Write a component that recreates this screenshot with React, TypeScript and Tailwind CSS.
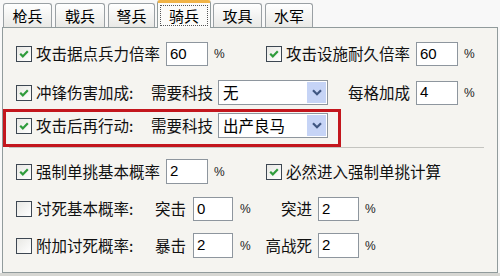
import type { ReactNode } from 'react';

const cjk = "font-['Noto_Sans_CJK_SC','Noto_Sans',sans-serif]";

function CheckBox({ checked }: { checked: boolean }) {
  return (
    <span className="shrink-0 w-[16px] h-[16px] border border-[#3d4752] bg-gradient-to-br from-[#e8e8e4] to-white flex items-center justify-center">
      {checked && (
        <svg width="12" height="12" viewBox="0 0 12 12">
          <path d="M2.2 5.8 L4.8 8.4 L9.8 3.2" fill="none" stroke="#2f9c3c" strokeWidth="2.2" />
        </svg>
      )}
    </span>
  );
}

function Field({ value, w = 'w-[42px]', h = 'h-[24px]', className = '' }: { value: string; w?: string; h?: string; className?: string }) {
  return (
    <span
      className={`shrink-0 ${w} ${h} ${className} border border-[#8e969e] bg-white flex items-center pl-[3px] text-[15px] text-black font-['Liberation_Sans',sans-serif]`}
    >
      {value}
    </span>
  );
}

function Pct({ className = 'ml-[6px]' }: { className?: string }) {
  return (
    <span className={`shrink-0 block w-[8px] ${className} text-[12px] leading-none text-[#222] font-['Liberation_Sans',sans-serif]`}>
      %
    </span>
  );
}

function Combo({ value }: { value: string }) {
  return (
    <span className="shrink-0 ml-[5px] w-[110px] h-[25px] border border-[#8e969e] bg-white flex items-center">
      <span className={`flex-1 pl-[4px] text-[15.5px] leading-none ${cjk}`}>{value}</span>
      <span className="w-[19px] h-[21px] mr-[1px] bg-[#c6d4f6] flex items-center justify-center">
        <svg width="10" height="7" viewBox="0 0 10 7">
          <path d="M1 1.2 L5 5.2 L9 1.2" fill="none" stroke="#3f5682" strokeWidth="2.2" />
        </svg>
      </span>
    </span>
  );
}

function Label({ children, className = '' }: { children: ReactNode; className?: string }) {
  return (
    <span className={`block shrink-0 ${className} whitespace-nowrap text-[15.5px] leading-none text-[#111]`}>
      {children}
    </span>
  );
}

const tabs = ['枪兵', '戟兵', '弩兵', '骑兵', '攻具', '水军'];
const tabWidths = ['w-[49px]', 'w-[50px]', 'w-[47px]', 'w-[54px]', 'w-[49px]', 'w-[48px]'];

export default function App() {
  return (
    <div className={`w-[500px] h-[276px] bg-[#f8f8f8] overflow-hidden ${cjk}`}>
      {/* tab strip */}
      <div className="h-[27px] flex items-end pl-[3px] gap-[3px]">
        {tabs.map((t, i) =>
          i === 3 ? (
            <div
              key={t}
              className={`relative z-10 ${tabWidths[i]} h-[28px] -mb-[1px] -mx-[1px] rounded-t-[3px] border border-b-0 border-[#919b9c] border-t-[3px] border-t-[#f0b347] bg-[#fbfbf9] flex p-[2px]`}
            >
              <span className="flex-1 border border-dotted border-[#555] flex items-center justify-center text-[15px] leading-none text-black">
                {t}
              </span>
            </div>
          ) : (
            <div
              key={t}
              className={`${tabWidths[i]} h-[24px] rounded-t-[3px] border border-b-0 border-[#9aa0a4] bg-gradient-to-b from-white to-[#e9e9e6] flex items-center justify-center text-[15px] leading-none text-black`}
            >
              {t}
            </div>
          )
        )}
      </div>

      {/* page */}
      <div className="ml-[2px] w-[496px] h-[246px] border border-[#919b9c] bg-[#f5f4f0] flex flex-col">
        {/* row 1 */}
        <div className="mt-[14px] h-[24px] pl-[13px] flex items-center">
          <div className="w-[250px] flex items-center">
            <CheckBox checked />
            <Label className="ml-[4px] w-[124px]">攻击据点兵力倍率</Label>
            <Field value="60" className="ml-[6px]" />
            <Pct />
          </div>
          <CheckBox checked />
          <Label className="ml-[4px] w-[124px]">攻击设施耐久倍率</Label>
          <Field value="60" className="ml-[6px]" />
          <Pct />
        </div>

        {/* row 2 */}
        <div className="mt-[14px] h-[25px] pl-[13px] flex items-center">
          <CheckBox checked />
          <Label className="ml-[4px] w-[115px]">冲锋伤害加成:</Label>
          <Label className="w-[62px]">需要科技</Label>
          <Combo value="无" />
          <Label className="ml-[20px] w-[62px]">每格加成</Label>
          <Field value="4" className="ml-[6px]" />
          <Pct />
        </div>

        {/* row 3, marked */}
        <div className="mt-[4px] w-[338px] h-[38px] border-[3px] border-[#c3161d] pl-[10px] pt-[1px]">
          <div className="h-[25px] flex items-center">
            <CheckBox checked />
            <Label className="ml-[4px] w-[115px]">攻击后再行动:</Label>
            <Label className="w-[62px]">需要科技</Label>
            <Combo value="出产良马" />
          </div>
        </div>

        <div className="ml-[6px] w-[475px] h-px bg-[#c4c4c0]" />

        {/* row 4 */}
        <div className="mt-[11px] h-[25px] pl-[13px] flex items-center">
          <div className="w-[250px] flex items-center">
            <CheckBox checked />
            <Label className="ml-[4px] w-[124px]">强制单挑基本概率</Label>
            <Field value="2" h="h-[25px]" className="ml-[6px]" />
            <Pct />
          </div>
          <CheckBox checked />
          <Label className="ml-[4px]">必然进入强制单挑计算</Label>
        </div>

        {/* row 5 */}
        <div className="mt-[13px] h-[24px] pl-[13px] flex items-center">
          <CheckBox checked={false} />
          <Label className="ml-[4px] w-[119px]">讨死基本概率:</Label>
          <Label className="w-[31px]">突击</Label>
          <Field value="0" w="w-[40px]" className="ml-[7px]" />
          <Pct className="ml-[7px]" />
          <Label className="w-[64px] text-right">突进</Label>
          <Field value="2" w="w-[41px]" className="ml-[6px]" />
          <Pct />
        </div>

        {/* row 6 */}
        <div className="mt-[12px] h-[25px] pl-[13px] flex items-center">
          <CheckBox checked={false} />
          <Label className="ml-[4px] w-[119px]">附加讨死概率:</Label>
          <Label className="w-[31px]">暴击</Label>
          <Field value="2" w="w-[40px]" h="h-[25px]" className="ml-[7px]" />
          <Pct className="ml-[7px]" />
          <Label className="w-[64px] text-right">高战死</Label>
          <Field value="2" w="w-[41px]" h="h-[25px]" className="ml-[6px]" />
          <Pct />
        </div>
      </div>
      <div className="h-[3px] bg-[#d6d6d2]" />
    </div>
  );
}
